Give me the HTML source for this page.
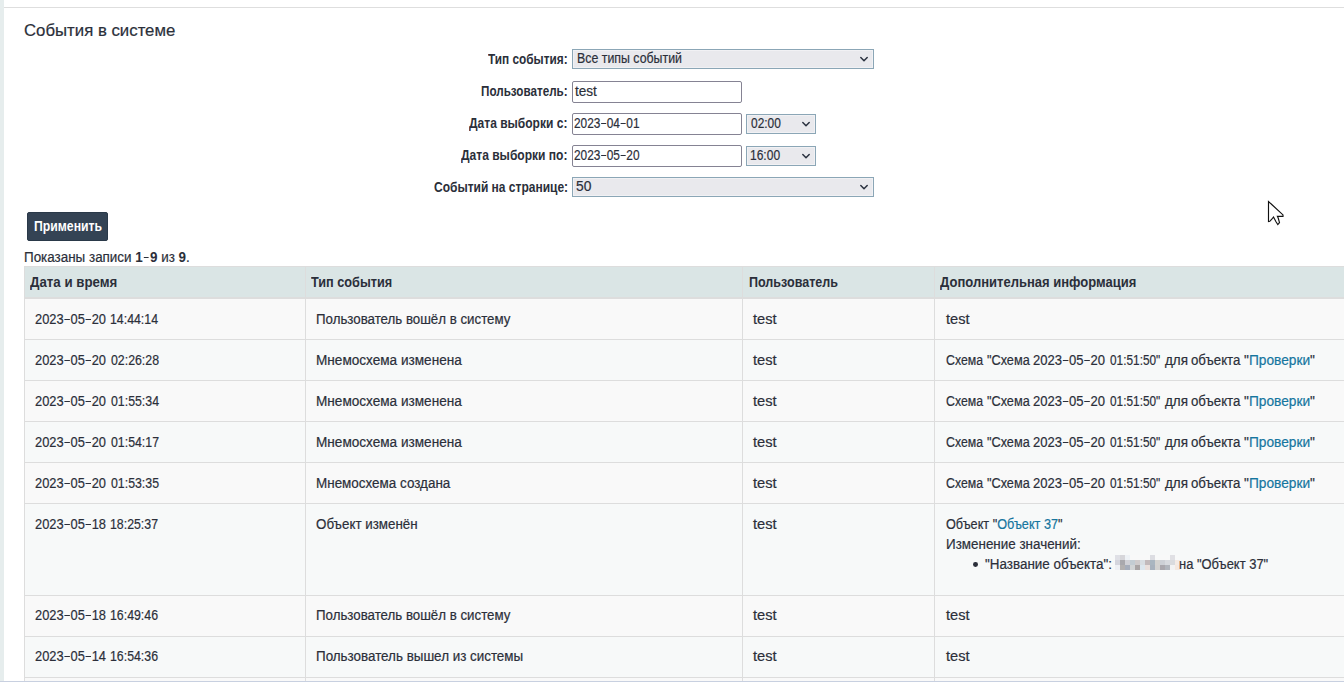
<!DOCTYPE html>
<html><head><meta charset="utf-8"><title>События в системе</title><style>
*{margin:0;padding:0;box-sizing:border-box}
html,body{width:1344px;height:685px;overflow:hidden;background:#fff}
body{position:relative;font-family:"Liberation Sans",sans-serif;color:#2b2f3a;font-size:14px}
.a{position:absolute}
.t{position:absolute;white-space:nowrap;line-height:20px;transform-origin:0 0}
.t b{font-weight:bold;-webkit-text-stroke:0}
.r{-webkit-text-stroke:0.2px currentColor}
.d{display:inline-block;width:5.5px;height:1.3px;background:currentColor;vertical-align:4px;margin:0 1px}
.sel{position:absolute;background:#e9e9ed;border:1px solid #8ba6b6;box-shadow:inset 0 0 0 1px #f1f1f4}
.inp{position:absolute;background:#fff;border:1px solid #858393;border-radius:2px}
.chev{position:absolute;width:9px;height:6px}
.hl{position:absolute;height:1px;background:#dddddd}
.vl{position:absolute;width:1px;background:#dddddd}
</style></head><body>
<div class="a" style="left:0;top:0;width:4px;height:681px;background:#e6eded"></div>
<div class="a" style="left:4px;top:7px;width:1340px;height:1px;background:#dedede"></div>
<div class="sel" style="left:572px;top:49px;width:302px;height:20px"></div>
<svg class="a" style="left:859.00px;top:56.25px" width="10" height="7" viewBox="0 0 10 7"><path d="M1.8 1.5 L5 4.7 L8.2 1.5" fill="none" stroke="#2b3240" stroke-width="1.5" stroke-linecap="round" stroke-linejoin="round"/></svg>
<div class="inp" style="left:572px;top:81px;width:170px;height:22px"></div>
<div class="inp" style="left:572px;top:113px;width:170px;height:22px"></div>
<div class="sel" style="left:746px;top:114px;width:70px;height:20px"></div>
<svg class="a" style="left:801.00px;top:121.25px" width="10" height="7" viewBox="0 0 10 7"><path d="M1.8 1.5 L5 4.7 L8.2 1.5" fill="none" stroke="#2b3240" stroke-width="1.5" stroke-linecap="round" stroke-linejoin="round"/></svg>
<div class="inp" style="left:572px;top:145px;width:170px;height:22px"></div>
<div class="sel" style="left:746px;top:146px;width:70px;height:20px"></div>
<svg class="a" style="left:801.00px;top:153.25px" width="10" height="7" viewBox="0 0 10 7"><path d="M1.8 1.5 L5 4.7 L8.2 1.5" fill="none" stroke="#2b3240" stroke-width="1.5" stroke-linecap="round" stroke-linejoin="round"/></svg>
<div class="sel" style="left:572px;top:177px;width:302px;height:20px"></div>
<svg class="a" style="left:859.00px;top:184.25px" width="10" height="7" viewBox="0 0 10 7"><path d="M1.8 1.5 L5 4.7 L8.2 1.5" fill="none" stroke="#2b3240" stroke-width="1.5" stroke-linecap="round" stroke-linejoin="round"/></svg>
<div class="a" style="left:27px;top:212px;width:81px;height:29px;background:#344354;border:1px solid #2a3949;border-radius:2px"></div>
<div class="a" style="left:24px;top:266px;width:1320px;height:33px;background:#dae5e5"></div>
<div class="hl" style="left:24px;top:266px;width:1320px"></div>
<div class="a" style="left:24px;top:297px;width:1320px;height:2px;background:#dddddd"></div>
<div class="a" style="left:25px;top:299px;width:1319px;height:40px;background:#f9f9f9"></div>
<div class="hl" style="left:24px;top:339px;width:1320px"></div>
<div class="a" style="left:25px;top:340px;width:1319px;height:40px;background:#f7f9f9"></div>
<div class="hl" style="left:24px;top:380px;width:1320px"></div>
<div class="a" style="left:25px;top:381px;width:1319px;height:40px;background:#f9f9f9"></div>
<div class="hl" style="left:24px;top:421px;width:1320px"></div>
<div class="a" style="left:25px;top:422px;width:1319px;height:40px;background:#f7f9f9"></div>
<div class="hl" style="left:24px;top:462px;width:1320px"></div>
<div class="a" style="left:25px;top:463px;width:1319px;height:40px;background:#f9f9f9"></div>
<div class="hl" style="left:24px;top:503px;width:1320px"></div>
<div class="a" style="left:25px;top:504px;width:1319px;height:91px;background:#f7f9f9"></div>
<div class="hl" style="left:24px;top:595px;width:1320px"></div>
<div class="a" style="left:25px;top:596px;width:1319px;height:40px;background:#f9f9f9"></div>
<div class="hl" style="left:24px;top:636px;width:1320px"></div>
<div class="a" style="left:25px;top:637px;width:1319px;height:40px;background:#f7f9f9"></div>
<div class="hl" style="left:24px;top:677px;width:1320px"></div>
<div class="a" style="left:25px;top:678px;width:1319px;height:3px;background:#f9f9f9"></div>
<div class="vl" style="left:24px;top:266px;height:415px"></div>
<div class="vl" style="left:305px;top:266px;height:415px"></div>
<div class="vl" style="left:742px;top:266px;height:415px"></div>
<div class="vl" style="left:934px;top:266px;height:415px"></div>
<div class="a" style="left:1115px;top:555px;width:5px;height:5px;background:#dfe0e6"></div>
<div class="a" style="left:1120px;top:555px;width:5px;height:5px;background:#d6d6da"></div>
<div class="a" style="left:1125px;top:555px;width:5px;height:5px;background:#eef2f6"></div>
<div class="a" style="left:1130px;top:555px;width:5px;height:5px;background:#f8f9f9"></div>
<div class="a" style="left:1135px;top:555px;width:5px;height:5px;background:#f8f9f9"></div>
<div class="a" style="left:1140px;top:555px;width:5px;height:5px;background:#f8f9f9"></div>
<div class="a" style="left:1145px;top:555px;width:5px;height:5px;background:#f8f9f9"></div>
<div class="a" style="left:1150px;top:555px;width:5px;height:5px;background:#dcdde2"></div>
<div class="a" style="left:1155px;top:555px;width:5px;height:5px;background:#f8f9f9"></div>
<div class="a" style="left:1160px;top:555px;width:5px;height:5px;background:#f8f9f9"></div>
<div class="a" style="left:1165px;top:555px;width:5px;height:5px;background:#f8f9f9"></div>
<div class="a" style="left:1170px;top:555px;width:5px;height:5px;background:#e0e0e4"></div>
<div class="a" style="left:1175px;top:555px;width:5px;height:5px;background:#f8f9f9"></div>
<div class="a" style="left:1115px;top:560px;width:5px;height:5px;background:#d4d5dd"></div>
<div class="a" style="left:1120px;top:560px;width:5px;height:5px;background:#a9a8ad"></div>
<div class="a" style="left:1125px;top:560px;width:5px;height:5px;background:#d0d0d6"></div>
<div class="a" style="left:1130px;top:560px;width:5px;height:5px;background:#c3ccd2"></div>
<div class="a" style="left:1135px;top:560px;width:5px;height:5px;background:#cfcbcb"></div>
<div class="a" style="left:1140px;top:560px;width:5px;height:5px;background:#d8dde2"></div>
<div class="a" style="left:1145px;top:560px;width:5px;height:5px;background:#c2b9bb"></div>
<div class="a" style="left:1150px;top:560px;width:5px;height:5px;background:#a9b6c0"></div>
<div class="a" style="left:1155px;top:560px;width:5px;height:5px;background:#d3d3d0"></div>
<div class="a" style="left:1160px;top:560px;width:5px;height:5px;background:#cdd0d6"></div>
<div class="a" style="left:1165px;top:560px;width:5px;height:5px;background:#d8dadf"></div>
<div class="a" style="left:1170px;top:560px;width:5px;height:5px;background:#dadbde"></div>
<div class="a" style="left:1175px;top:560px;width:5px;height:5px;background:#f4ebe5"></div>
<div class="a" style="left:1115px;top:565px;width:5px;height:5px;background:#eef0f4"></div>
<div class="a" style="left:1120px;top:565px;width:5px;height:5px;background:#b3b0b0"></div>
<div class="a" style="left:1125px;top:565px;width:5px;height:5px;background:#a6adbb"></div>
<div class="a" style="left:1130px;top:565px;width:5px;height:5px;background:#d1d4d5"></div>
<div class="a" style="left:1135px;top:565px;width:5px;height:5px;background:#a9a4a4"></div>
<div class="a" style="left:1140px;top:565px;width:5px;height:5px;background:#dce6ee"></div>
<div class="a" style="left:1145px;top:565px;width:5px;height:5px;background:#eadfdc"></div>
<div class="a" style="left:1150px;top:565px;width:5px;height:5px;background:#a7b2bd"></div>
<div class="a" style="left:1155px;top:565px;width:5px;height:5px;background:#d2d2d0"></div>
<div class="a" style="left:1160px;top:565px;width:5px;height:5px;background:#aaa7ad"></div>
<div class="a" style="left:1165px;top:565px;width:5px;height:5px;background:#b1b5bd"></div>
<div class="a" style="left:1170px;top:565px;width:5px;height:5px;background:#f3f3f3"></div>
<div class="a" style="left:1175px;top:565px;width:5px;height:5px;background:#f4e8e0"></div>
<div class="a" style="left:973.2px;top:562px;width:4.8px;height:4.8px;border-radius:50%;background:#2b2f3a"></div>
<div class="t r" style="left:23.81px;top:21px;font-size:17px;transform:scaleX(0.9868);">События в системе</div>
<div class="t" style="left:487.90px;top:49px;font-weight:bold;transform:scaleX(0.8452);">Тип события:</div>
<div class="t" style="left:480.67px;top:81px;font-weight:bold;transform:scaleX(0.8333);">Пользователь:</div>
<div class="t" style="left:468.60px;top:113px;font-weight:bold;transform:scaleX(0.8588);">Дата выборки с:</div>
<div class="t" style="left:460.70px;top:145px;font-weight:bold;transform:scaleX(0.8602);">Дата выборки по:</div>
<div class="t" style="left:433.64px;top:177px;font-weight:bold;transform:scaleX(0.8571);">Событий на странице:</div>
<div class="t r" style="left:577.12px;top:48px;transform:scaleX(0.8829);">Все типы событий</div>
<div class="t r" style="left:575.20px;top:81px;transform:scaleX(0.9696);">test</div>
<div class="t r" style="left:574.35px;top:113px;transform:scaleX(0.8474);">2023<i class="d"></i>04<i class="d"></i>01</div>
<div class="t r" style="left:574.35px;top:145px;transform:scaleX(0.8474);">2023<i class="d"></i>05<i class="d"></i>20</div>
<div class="t r" style="left:751.20px;top:113px;transform:scaleX(0.8514);">02:00</div>
<div class="t r" style="left:749.94px;top:145px;transform:scaleX(0.8588);">16:00</div>
<div class="t r" style="left:575.91px;top:176px;transform:scaleX(0.9857);">50</div>
<div class="t" style="left:33.53px;top:216px;font-weight:bold;color:#ffffff;transform:scaleX(0.8737);">Применить</div>
<div class="t r" style="left:24.14px;top:247px;transform:scaleX(0.9585);">Показаны записи <b>1<i class="d"></i>9</b> из <b>9</b>.</div>
<div class="t" style="left:30.10px;top:272px;font-weight:bold;transform:scaleX(0.9484);">Дата и время</div>
<div class="t" style="left:311.20px;top:272px;font-weight:bold;transform:scaleX(0.9067);">Тип события</div>
<div class="t" style="left:748.90px;top:272px;font-weight:bold;transform:scaleX(0.8959);">Пользователь</div>
<div class="t" style="left:940.00px;top:272px;font-weight:bold;transform:scaleX(0.9300);">Дополнительная информация</div>
<div class="t r" style="left:34.88px;top:309px;transform:scaleX(0.9184);">2023<i class="d"></i>05<i class="d"></i>20</div>
<div class="t r" style="left:110.12px;top:309px;transform:scaleX(0.8811);">14:44:14</div>
<div class="t r" style="left:315.85px;top:309px;transform:scaleX(0.9490);">Пользователь вошёл в систему</div>
<div class="t r" style="left:753.40px;top:309px;transform:scaleX(1.0478);">test</div>
<div class="t r" style="left:945.50px;top:309px;transform:scaleX(1.0435);">test</div>
<div class="t r" style="left:34.88px;top:350px;transform:scaleX(0.9184);">2023<i class="d"></i>05<i class="d"></i>20</div>
<div class="t r" style="left:111.00px;top:350px;transform:scaleX(0.8811);">02:26:28</div>
<div class="t r" style="left:315.83px;top:350px;transform:scaleX(0.9705);">Мнемосхема изменена</div>
<div class="t r" style="left:753.40px;top:350px;transform:scaleX(1.0478);">test</div>
<div class="t r" style="left:945.72px;top:350px;transform:scaleX(0.8780);">Схема</div>
<div class="t r" style="left:986.69px;top:350px;transform:scaleX(0.9065);">"Схема</div>
<div class="t r" style="left:1033.27px;top:350px;transform:scaleX(0.9316);">2023<i class="d"></i>05<i class="d"></i>20</div>
<div class="t r" style="left:1110.00px;top:350px;transform:scaleX(0.8458);">01:51:50"</div>
<div class="t r" style="left:1164.80px;top:350px;transform:scaleX(0.9609);">для</div>
<div class="t r" style="left:1190.95px;top:350px;transform:scaleX(0.9451);">объекта</div>
<div class="t r" style="left:1244.02px;top:350px;transform:scaleX(0.9803);">"<span style="color:#16769f">Проверки</span>"</div>
<div class="t r" style="left:34.88px;top:391px;transform:scaleX(0.9184);">2023<i class="d"></i>05<i class="d"></i>20</div>
<div class="t r" style="left:111.00px;top:391px;transform:scaleX(0.8811);">01:55:34</div>
<div class="t r" style="left:315.83px;top:391px;transform:scaleX(0.9705);">Мнемосхема изменена</div>
<div class="t r" style="left:753.40px;top:391px;transform:scaleX(1.0478);">test</div>
<div class="t r" style="left:945.72px;top:391px;transform:scaleX(0.8780);">Схема</div>
<div class="t r" style="left:986.69px;top:391px;transform:scaleX(0.9065);">"Схема</div>
<div class="t r" style="left:1033.27px;top:391px;transform:scaleX(0.9316);">2023<i class="d"></i>05<i class="d"></i>20</div>
<div class="t r" style="left:1110.00px;top:391px;transform:scaleX(0.8458);">01:51:50"</div>
<div class="t r" style="left:1164.80px;top:391px;transform:scaleX(0.9609);">для</div>
<div class="t r" style="left:1190.95px;top:391px;transform:scaleX(0.9451);">объекта</div>
<div class="t r" style="left:1244.02px;top:391px;transform:scaleX(0.9803);">"<span style="color:#16769f">Проверки</span>"</div>
<div class="t r" style="left:34.88px;top:432px;transform:scaleX(0.9184);">2023<i class="d"></i>05<i class="d"></i>20</div>
<div class="t r" style="left:111.00px;top:432px;transform:scaleX(0.8811);">01:54:17</div>
<div class="t r" style="left:315.83px;top:432px;transform:scaleX(0.9705);">Мнемосхема изменена</div>
<div class="t r" style="left:753.40px;top:432px;transform:scaleX(1.0478);">test</div>
<div class="t r" style="left:945.72px;top:432px;transform:scaleX(0.8780);">Схема</div>
<div class="t r" style="left:986.69px;top:432px;transform:scaleX(0.9065);">"Схема</div>
<div class="t r" style="left:1033.27px;top:432px;transform:scaleX(0.9316);">2023<i class="d"></i>05<i class="d"></i>20</div>
<div class="t r" style="left:1110.00px;top:432px;transform:scaleX(0.8458);">01:51:50"</div>
<div class="t r" style="left:1164.80px;top:432px;transform:scaleX(0.9609);">для</div>
<div class="t r" style="left:1190.95px;top:432px;transform:scaleX(0.9451);">объекта</div>
<div class="t r" style="left:1244.02px;top:432px;transform:scaleX(0.9803);">"<span style="color:#16769f">Проверки</span>"</div>
<div class="t r" style="left:34.88px;top:473px;transform:scaleX(0.9184);">2023<i class="d"></i>05<i class="d"></i>20</div>
<div class="t r" style="left:111.00px;top:473px;transform:scaleX(0.8811);">01:53:35</div>
<div class="t r" style="left:315.84px;top:473px;transform:scaleX(0.9604);">Мнемосхема создана</div>
<div class="t r" style="left:753.40px;top:473px;transform:scaleX(1.0478);">test</div>
<div class="t r" style="left:945.72px;top:473px;transform:scaleX(0.8780);">Схема</div>
<div class="t r" style="left:986.69px;top:473px;transform:scaleX(0.9065);">"Схема</div>
<div class="t r" style="left:1033.27px;top:473px;transform:scaleX(0.9316);">2023<i class="d"></i>05<i class="d"></i>20</div>
<div class="t r" style="left:1110.00px;top:473px;transform:scaleX(0.8458);">01:51:50"</div>
<div class="t r" style="left:1164.80px;top:473px;transform:scaleX(0.9609);">для</div>
<div class="t r" style="left:1190.95px;top:473px;transform:scaleX(0.9451);">объекта</div>
<div class="t r" style="left:1244.02px;top:473px;transform:scaleX(0.9803);">"<span style="color:#16769f">Проверки</span>"</div>
<div class="t r" style="left:34.88px;top:514px;transform:scaleX(0.9184);">2023<i class="d"></i>05<i class="d"></i>18</div>
<div class="t r" style="left:110.12px;top:514px;transform:scaleX(0.8811);">18:25:37</div>
<div class="t r" style="left:315.85px;top:514px;transform:scaleX(0.9543);">Объект изменён</div>
<div class="t r" style="left:753.40px;top:514px;transform:scaleX(1.0478);">test</div>
<div class="t r" style="left:945.89px;top:514px;transform:scaleX(0.9055);">Объект "<span style="color:#16769f">Объект 37</span>"</div>
<div class="t r" style="left:945.84px;top:534px;transform:scaleX(0.9583);">Изменение значений:</div>
<div class="t r" style="left:985.34px;top:554px;transform:scaleX(0.9592);">"Название объекта":</div>
<div class="t r" style="left:1179.38px;top:554px;transform:scaleX(0.9242);">на "Объект 37"</div>
<div class="t r" style="left:34.88px;top:605px;transform:scaleX(0.9184);">2023<i class="d"></i>05<i class="d"></i>18</div>
<div class="t r" style="left:110.12px;top:605px;transform:scaleX(0.8811);">16:49:46</div>
<div class="t r" style="left:315.85px;top:605px;transform:scaleX(0.9490);">Пользователь вошёл в систему</div>
<div class="t r" style="left:753.40px;top:605px;transform:scaleX(1.0478);">test</div>
<div class="t r" style="left:945.50px;top:605px;transform:scaleX(1.0435);">test</div>
<div class="t r" style="left:34.88px;top:646px;transform:scaleX(0.9184);">2023<i class="d"></i>05<i class="d"></i>14</div>
<div class="t r" style="left:110.12px;top:646px;transform:scaleX(0.8811);">16:54:36</div>
<div class="t r" style="left:315.84px;top:646px;transform:scaleX(0.9567);">Пользователь вышел из системы</div>
<div class="t r" style="left:753.40px;top:646px;transform:scaleX(1.0478);">test</div>
<div class="t r" style="left:945.50px;top:646px;transform:scaleX(1.0435);">test</div>
<div class="a" style="left:0;top:681px;width:1344px;height:1px;background:#c8d0e0"></div>
<div class="a" style="left:0;top:682px;width:1344px;height:3px;background:#ffffff"></div>
<svg class="a" style="left:1267px;top:200px" width="18" height="27" viewBox="0 0 18 27"><path d="M1.5 1.5 L1.5 21.5 L2.8 21.3 L5.5 18.3 L6.5 17 L9 21.8 L10.8 24.5 L12.5 22.5 L11.2 18 L10.4 16.3 L16 16.3 L16 14.9 Z" fill="#fff" stroke="#111" stroke-width="1.15" stroke-linejoin="miter"/></svg>
</body></html>
